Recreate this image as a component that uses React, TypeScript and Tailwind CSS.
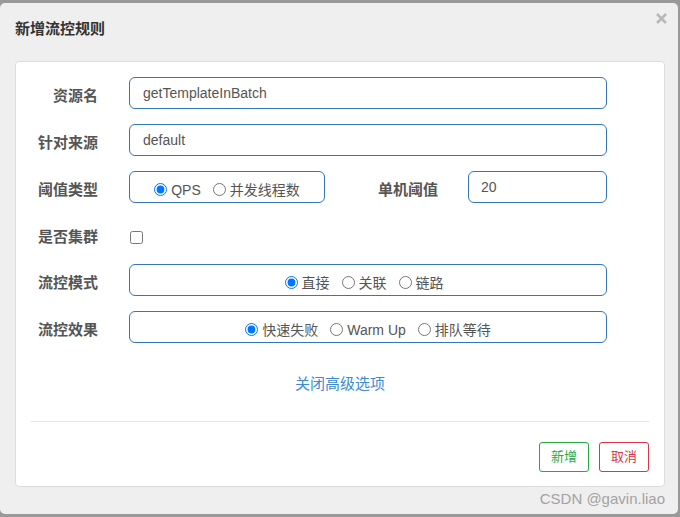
import React from "react";

const font = { fontFamily: '"Liberation Sans", "Noto Sans CJK SC", sans-serif' };

function Radio({ label, checked, name }: { label: string; checked?: boolean; name: string }) {
  return (
    <label className="flex items-center gap-[4px] text-[14px] leading-[20px] text-[#555] mt-[6px]">
      <input type="radio" name={name} defaultChecked={checked} className="m-0 w-[13px] h-[13px] relative top-[-1px]" />
      <span>{label}</span>
    </label>
  );
}

function Label({ children, className = "" }: { children: React.ReactNode; className?: string }) {
  return (
    <div className={`w-[82px] shrink-0 text-right font-bold text-[15px] leading-[20px] pt-[6px] text-[#555] ${className}`}>
      {children}
    </div>
  );
}

export default function App() {
  return (
    <div className="relative w-[680px] h-[517px] bg-[#999] pt-[3px] overflow-hidden" style={font}>
      <div className="w-[678px] h-[511px] bg-[#efefef] rounded-[5px] flex flex-col">
        <div className="flex justify-between h-[58px] pl-[15px] pr-[11px]">
          <div className="mt-[16px] text-[15px] leading-[20px] font-bold text-[#333]">新增流控规则</div>
          <svg width="11" height="11" viewBox="0 0 11 11" className="mt-[10px]">
            <path d="M1 1 L10 10 M10 1 L1 10" stroke="#b8b8b8" strokeWidth="2.6" strokeLinecap="butt" />
          </svg>
        </div>
        <div className="ml-[15px] w-[650px] h-[426px] bg-white border border-[#dcdcdc] rounded-[4px] pt-[15px] flex flex-col">
          <div className="flex flex-col gap-[15px]">
            <div className="flex items-center h-[32px]">
              <Label>资源名</Label>
              <div className="ml-[31px] w-[478px] h-[32px] border border-[#3476b8] rounded-[6px] px-[13px] flex items-center text-[14px] text-[#555]">
                getTemplateInBatch
              </div>
            </div>
            <div className="flex items-center h-[32px]">
              <Label>针对来源</Label>
              <div className="ml-[31px] w-[478px] h-[32px] border border-[#3476b8] rounded-[6px] px-[13px] flex items-center text-[14px] text-[#555]">
                default
              </div>
            </div>
            <div className="flex items-center h-[32px]">
              <Label>阈值类型</Label>
              <div className="ml-[31px] w-[196px] h-[32px] border border-[#3476b8] rounded-[6px] flex items-center justify-center gap-[12px]">
                <Radio name="grade" label="QPS" checked />
                <Radio name="grade" label="并发线程数" />
              </div>
              <Label className="ml-[31px]">单机阈值</Label>
              <div className="ml-[30px] w-[139px] h-[32px] border border-[#3476b8] rounded-[6px] px-[12px] flex items-center text-[14px] text-[#555]">
                20
              </div>
            </div>
            <div className="flex items-center h-[31px]">
              <Label>是否集群</Label>
              <input type="checkbox" className="ml-[32px] mt-[7px] w-[13px] h-[13px]" />
            </div>
            <div className="flex items-center h-[32px]">
              <Label>流控模式</Label>
              <div className="ml-[31px] w-[478px] h-[32px] border border-[#3476b8] rounded-[6px] flex items-center justify-center gap-[12px] pr-[8px]">
                <Radio name="strategy" label="直接" checked />
                <Radio name="strategy" label="关联" />
                <Radio name="strategy" label="链路" />
              </div>
            </div>
            <div className="flex items-center h-[32px]">
              <Label>流控效果</Label>
              <div className="ml-[31px] w-[478px] h-[32px] border border-[#3476b8] rounded-[6px] flex items-center justify-center gap-[12px]">
                <Radio name="behavior" label="快速失败" checked />
                <Radio name="behavior" label="Warm Up" />
                <Radio name="behavior" label="排队等待" />
              </div>
            </div>
          </div>
          <div className="mt-[31px] text-center text-[15px] leading-[20px] text-[#3a8ad6]">关闭高级选项</div>
          <div className="mx-[15px] mt-[27px] h-px bg-[#e5e5e5]" />
          <div className="flex justify-end gap-[10px] mt-[20px] pr-[15px]">
            <div className="w-[50px] h-[30px] border border-[#27a845] rounded-[3px] flex items-center justify-center text-[13px] text-[#27a845]">
              新增
            </div>
            <div className="w-[50px] h-[30px] border border-[#dc3545] rounded-[3px] flex items-center justify-center text-[13px] text-[#dc3545]">
              取消
            </div>
          </div>
        </div>
      </div>
      <div className="absolute right-[15px] top-[489px] text-[15px] leading-[20px] text-[#a3a3a3]">CSDN @gavin.liao</div>
    </div>
  );
}
